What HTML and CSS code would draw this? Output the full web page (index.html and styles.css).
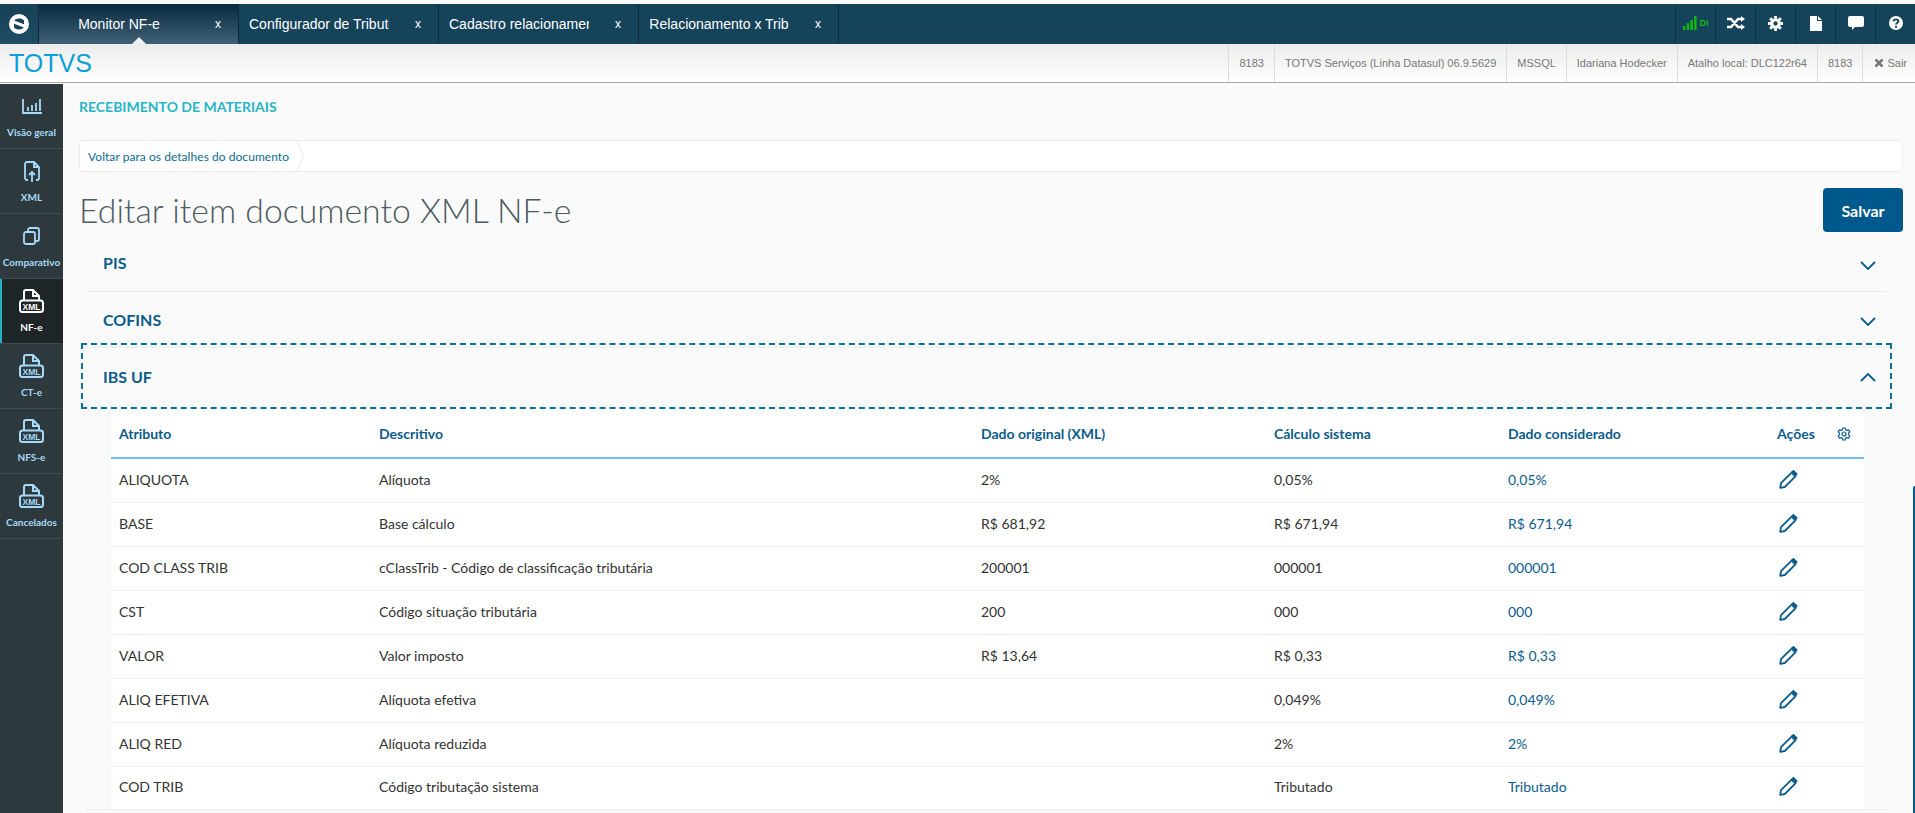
FILE: index.html
```html
<!DOCTYPE html>
<html lang="pt-BR">
<head>
<meta charset="utf-8">
<title>Editar item documento XML NF-e</title>
<link rel="stylesheet" href="styles.css">
</head>
<body>
<svg class="defs" width="0" height="0" aria-hidden="true">
  <symbol id="i-pencil" viewBox="0 0 19 19">
    <path d="M1.2 17.8l.8-4.6L12.6 2.6l3.8 3.8L5.800 17z" fill="none" stroke="currentColor" stroke-width="1.800" stroke-linejoin="round"/>
    <path d="M13.500 1.700l1-.7 3 3-.7 1.200z" fill="none" stroke="currentColor" stroke-width="1.800"/>
  </symbol>
  <symbol id="i-down" viewBox="0 0 16 9"><path d="M1 1l7 7 7-7" fill="none" stroke="currentColor" stroke-width="1.800"/></symbol>
  <symbol id="i-up" viewBox="0 0 16 9"><path d="M1 8l7-7 7 7" fill="none" stroke="currentColor" stroke-width="1.800"/></symbol>
</svg>

<header class="topbar">
  <div class="logo-cell">
    <svg class="logo" viewBox="0 0 20 20"><circle cx="10" cy="10" r="10" fill="#fff"/><path d="M5.200 6.400C7.500 4 12 3.700 15 6.500L15 10.200z" fill="#15435a"/><path d="M14.800 13.600C12.500 16 8 16.300 5 13.500L5 9.800z" fill="#15435a"/></svg>
  </div>
  <div class="tab tab-active"><span class="tab-label">Monitor NF-e</span><span class="tab-x">x</span></div>
  <div class="tab"><span class="tab-label">Configurador de Tributos</span><span class="tab-x">x</span></div>
  <div class="tab"><span class="tab-label">Cadastro relacionamento</span><span class="tab-x">x</span></div>
  <div class="tab"><span class="tab-label">Relacionamento x Trib</span><span class="tab-x">x</span></div>
  <div class="top-actions">
    <div class="action action-signal">
      <svg class="signal" viewBox="0 0 14 14"><path d="M0 10h2.500v4H0zM3.700 7h2.500v7H3.700zM7.400 4h2.500v10H7.400zM11.100 0h2.500v14h-2.500z" fill="#0fb80f"/></svg>
      <span class="signal-text">DI</span>
    </div>
    <div class="action"><svg class="ic-shuffle" viewBox="0 0 18 14"><path d="M0 3h4l7 8h3M0 11h4l7-8h3" fill="none" stroke="#fff" stroke-width="2.600"/><path d="M14 0l4 3-4 3zM14 8l4 3-4 3z" fill="#fff"/></svg></div>
    <div class="action"><svg class="ic-gear" viewBox="0 0 16 16"><circle cx="8" cy="8" r="4" fill="none" stroke="#fff" stroke-width="3.400"/><path d="M8 0v3M8 13v3M0 8h3M13 8h3M2.300 2.300l2.200 2.200M11.500 11.500l2.200 2.200M2.300 13.700l2.200-2.200M11.500 4.500l2.200-2.200" stroke="#fff" stroke-width="3"/></svg></div>
    <div class="action"><svg class="ic-file" viewBox="0 0 12 15"><path d="M0 0h7v5h5v10H0zM8 0l4 4H8z" fill="#fff"/></svg></div>
    <div class="action"><svg class="ic-comment" viewBox="0 0 16 14"><path d="M2 0h12a2 2 0 0 1 2 2v7a2 2 0 0 1-2 2H7l-3 3v-3H2a2 2 0 0 1-2-2V2a2 2 0 0 1 2-2z" fill="#fff"/></svg></div>
    <div class="action"><svg class="ic-help" viewBox="0 0 14 14"><circle cx="7" cy="7" r="7" fill="#fff"/><path d="M4.600 5.300C4.800 2.800 9.400 2.800 9.400 5.200 9.400 6.800 7 6.800 7 8.600" fill="none" stroke="#15435a" stroke-width="1.900"/><path d="M6 9.800h2v2H6z" fill="#15435a"/></svg></div>
  </div>
</header>

<div class="infobar">
  <div class="brand">TOTVS</div>
  <div class="infos">
    <div class="info">8183</div>
    <div class="info">TOTVS Serviços (Linha Datasul) 06.9.5629</div>
    <div class="info">MSSQL</div>
    <div class="info">Idariana Hodecker</div>
    <div class="info">Atalho local: DLC122r64</div>
    <div class="info">8183</div>
    <div class="info info-exit"><svg class="ic-x" viewBox="0 0 10 10"><path d="M1.500 1.500l7 7M8.500 1.500l-7 7" stroke="#777" stroke-width="2.600"/></svg>Sair</div>
  </div>
</div>

<div class="shell">
  <nav class="sidebar">
    <a class="nav-item">
      <span class="nav-icon"><svg class="ic-chart" viewBox="0 0 20 15"><path d="M1 0v14h19M6 12V8M10 12V6M14 12V4M18 12V0" fill="none" stroke="currentColor" stroke-width="1.800"/></svg></span>
      <span class="nav-label">Visão geral</span>
    </a>
    <a class="nav-item">
      <span class="nav-icon"><svg class="ic-upload" viewBox="0 0 16 21"><path d="M4 19H3a2 2 0 0 1-2-2V3a2 2 0 0 1 2-2h7l5 5v11a2 2 0 0 1-2 2h-1M10 1v5h5" fill="none" stroke="currentColor" stroke-width="1.800"/><path d="M8 21V11M5 14l3-3 3 3" fill="none" stroke="currentColor" stroke-width="1.800"/></svg></span>
      <span class="nav-label">XML</span>
    </a>
    <a class="nav-item">
      <span class="nav-icon"><svg class="ic-copy" viewBox="0 0 17 18"><rect x="1" y="5" width="11" height="12" rx="2" fill="none" stroke="currentColor" stroke-width="1.800"/><path d="M5 5V3a2 2 0 0 1 2-2h7a2 2 0 0 1 2 2v9a2 2 0 0 1-2 2h-2" fill="none" stroke="currentColor" stroke-width="1.800"/></svg></span>
      <span class="nav-label">Comparativo</span>
    </a>
    <a class="nav-item nav-active">
      <span class="nav-icon"><svg class="ic-xml" viewBox="0 0 25 24"><path d="M5 11V3a2 2 0 0 1 2-2h7l6 6v4M14 1v6h6" fill="none" stroke="currentColor" stroke-width="2"/><rect x="1" y="11.500" width="23" height="11.500" rx="2.500" fill="none" stroke="currentColor" stroke-width="2"/><text x="12.500" y="20.600" text-anchor="middle" class="xml-text">XML</text></svg></span>
      <span class="nav-label">NF-e</span>
    </a>
    <a class="nav-item">
      <span class="nav-icon"><svg class="ic-xml" viewBox="0 0 25 24"><path d="M5 11V3a2 2 0 0 1 2-2h7l6 6v4M14 1v6h6" fill="none" stroke="currentColor" stroke-width="2"/><rect x="1" y="11.500" width="23" height="11.500" rx="2.500" fill="none" stroke="currentColor" stroke-width="2"/><text x="12.500" y="20.600" text-anchor="middle" class="xml-text">XML</text></svg></span>
      <span class="nav-label">CT-e</span>
    </a>
    <a class="nav-item">
      <span class="nav-icon"><svg class="ic-xml" viewBox="0 0 25 24"><path d="M5 11V3a2 2 0 0 1 2-2h7l6 6v4M14 1v6h6" fill="none" stroke="currentColor" stroke-width="2"/><rect x="1" y="11.500" width="23" height="11.500" rx="2.500" fill="none" stroke="currentColor" stroke-width="2"/><text x="12.500" y="20.600" text-anchor="middle" class="xml-text">XML</text></svg></span>
      <span class="nav-label">NFS-e</span>
    </a>
    <a class="nav-item">
      <span class="nav-icon"><svg class="ic-xml" viewBox="0 0 25 24"><path d="M5 11V3a2 2 0 0 1 2-2h7l6 6v4M14 1v6h6" fill="none" stroke="currentColor" stroke-width="2"/><rect x="1" y="11.500" width="23" height="11.500" rx="2.500" fill="none" stroke="currentColor" stroke-width="2"/><text x="12.500" y="20.600" text-anchor="middle" class="xml-text">XML</text></svg></span>
      <span class="nav-label">Cancelados</span>
    </a>
  </nav>

  <main class="content">
    <div class="module">RECEBIMENTO DE MATERIAIS</div>
    <div class="breadcrumb">
      <span class="crumb">Voltar para os detalhes do documento</span>
      <svg class="crumb-sep" viewBox="0 0 8 32"><path d="M0 0l7 16-7 16" fill="none" stroke="#e8e8e8"/></svg>
    </div>
    <div class="page-head">
      <h1 class="title">Editar item documento XML NF-e</h1>
      <button class="save" type="button">Salvar</button>
    </div>

    <section class="acc acc-pis">
      <div class="acc-head"><span class="acc-title">PIS</span><svg class="chev"><use href="#i-down"/></svg></div>
    </section>
    <section class="acc">
      <div class="acc-head"><span class="acc-title">COFINS</span><svg class="chev"><use href="#i-down"/></svg></div>
    </section>
    <section class="acc acc-open">
      <div class="acc-head acc-focus"><span class="acc-title">IBS UF</span><svg class="chev"><use href="#i-up"/></svg></div>
      <table class="grid">
        <colgroup>
          <col class="c1"><col class="c2"><col class="c3"><col class="c4"><col class="c5"><col class="c6">
        </colgroup>
        <thead>
          <tr>
            <th>Atributo</th><th>Descritivo</th><th>Dado original (XML)</th><th>Cálculo sistema</th><th>Dado considerado</th>
            <th><span class="th-actions">Ações<svg class="ic-settings" viewBox="0 0 14 14"><path d="M5.800 1h2.400l.4 1.700 1.300.7 1.700-.5 1.200 2-1.300 1.300v1.600l1.300 1.300-1.200 2-1.700-.5-1.300.7L8.200 13H5.800l-.4-1.700-1.300-.7-1.700.5-1.200-2 1.300-1.300V6.200L1.200 4.900l1.200-2 1.700.5 1.300-.7z" fill="none" stroke="currentColor" stroke-width="1.200" stroke-linejoin="round"/><circle cx="7" cy="7" r="2" fill="none" stroke="currentColor" stroke-width="1.200"/></svg></span></th>
          </tr>
        </thead>
        <tbody>
          <tr><td>ALIQUOTA</td><td>Alíquota</td><td>2%</td><td>0,05%</td><td class="link">0,05%</td><td><svg class="ic-pencil"><use href="#i-pencil"/></svg></td></tr>
          <tr><td>BASE</td><td>Base cálculo</td><td>R$ 681,92</td><td>R$ 671,94</td><td class="link">R$ 671,94</td><td><svg class="ic-pencil"><use href="#i-pencil"/></svg></td></tr>
          <tr><td>COD CLASS TRIB</td><td>cClassTrib - Código de classificação tributária</td><td>200001</td><td>000001</td><td class="link">000001</td><td><svg class="ic-pencil"><use href="#i-pencil"/></svg></td></tr>
          <tr><td>CST</td><td>Código situação tributária</td><td>200</td><td>000</td><td class="link">000</td><td><svg class="ic-pencil"><use href="#i-pencil"/></svg></td></tr>
          <tr><td>VALOR</td><td>Valor imposto</td><td>R$ 13,64</td><td>R$ 0,33</td><td class="link">R$ 0,33</td><td><svg class="ic-pencil"><use href="#i-pencil"/></svg></td></tr>
          <tr><td>ALIQ EFETIVA</td><td>Alíquota efetiva</td><td></td><td>0,049%</td><td class="link">0,049%</td><td><svg class="ic-pencil"><use href="#i-pencil"/></svg></td></tr>
          <tr><td>ALIQ RED</td><td>Alíquota reduzida</td><td></td><td>2%</td><td class="link">2%</td><td><svg class="ic-pencil"><use href="#i-pencil"/></svg></td></tr>
          <tr><td>COD TRIB</td><td>Código tributação sistema</td><td></td><td>Tributado</td><td class="link">Tributado</td><td><svg class="ic-pencil"><use href="#i-pencil"/></svg></td></tr>
        </tbody>
      </table>
    </section>
  </main>
</div>
<div class="scroll-thumb"></div>
</body>
</html>
```

FILE: styles.css
```css
* { box-sizing: border-box; }
html, body { margin: 0; height: 813px; overflow: hidden; }
body {
  background: #fafafa;
  font-family: "Lato", "Noto Sans", sans-serif;
  color: #333;
  padding-top: 4px;
  display: flex;
  flex-direction: column;
  position: relative;
}
.defs { position: absolute; }
.xml-text { font: 700 8.500px "Liberation Sans", sans-serif; fill: currentColor; }

/* top bar */
.topbar {
  height: 40px;
  flex: none;
  background: #15435a;
  display: flex;
  font-family: "Liberation Sans", Arial, sans-serif;
  color: #fff;
}
.logo-cell {
  width: 39px;
  background: linear-gradient(#164158, #1f4d63);
  border-right: 1px solid #0b2a3d;
  display: flex;
  align-items: center;
  justify-content: center;
  padding: 0 0 1px;
}
.logo { width: 20px; height: 20px; }
.tab {
  width: 200px;
  flex: none;
  border-right: 1px solid #0b2a3d;
  display: flex;
  align-items: center;
  padding: 0 16px 0 10px;
  position: relative;
  font-size: 14px;
}
.tab-active { background: linear-gradient(#0a2a40, #3f6075); }
.tab-active::after {
  content: "";
  position: absolute;
  left: 93px;
  bottom: 0;
  border: 7px solid transparent;
  border-top: 0;
  border-bottom-color: #f1f1f1;
}
.tab-label {
  width: 140px;
  margin-right: 26px;
  white-space: nowrap;
  overflow: hidden;
  text-align: center;
}
.tab-x { font-size: 12px; }
.top-actions { margin-left: auto; display: flex; }
.action {
  width: 40px;
  border-left: 1px solid #0e3145;
  display: flex;
  align-items: center;
  justify-content: center;
  padding-bottom: 2px;
}
.action-signal { gap: 3px; }
.signal { width: 14px; height: 14px; }
.signal-text { color: #0fb80f; font-size: 9px; font-weight: 700; }
.ic-shuffle { width: 18px; height: 14px; }
.ic-gear { width: 15px; height: 15px; }
.ic-file { width: 12px; height: 15px; }
.ic-comment { width: 16px; height: 14px; }
.ic-help { width: 14px; height: 14px; }

/* info bar */
.infobar {
  height: 39px;
  flex: none;
  background: linear-gradient(#ececec, #fff);
  border-bottom: 1px solid #a8a8a8;
  display: flex;
  justify-content: space-between;
  font-family: "Liberation Sans", Arial, sans-serif;
}
.brand { font-size: 25px; color: #0a9fd6; padding: 5px 0 0 9px; line-height: 29px; }
.infos { display: flex; }
.info {
  border-left: 1px solid #dcdcdc;
  padding: 0 10px;
  font-size: 11px;
  color: #777;
  display: flex;
  align-items: center;
  white-space: nowrap;
}
.info-exit { padding: 0 8px 0 11px; gap: 3px; }
.ic-x { width: 10px; height: 10px; }

/* shell */
.shell { flex: 1; display: flex; min-height: 0; padding-top: 1px; }
.sidebar { width: 63px; flex: none; background: #2d393c; display: flex; flex-direction: column; }
.nav-item {
  height: 65px;
  flex: none;
  display: flex;
  flex-direction: column;
  align-items: center;
  color: #a6dafa;
  border-bottom: 1px solid #3f4b4e;
  padding-top: 2px;
}
.nav-active { background: #1e2527; color: #fff; box-shadow: inset 2px 0 0 #25b0c6; }
.nav-icon { height: 40px; display: flex; align-items: center; justify-content: center; }
.nav-label { font-size: 10px; line-height: 12px; font-weight: 700; white-space: nowrap; }
.ic-chart { width: 20px; height: 15px; }
.ic-upload { width: 16px; height: 21px; }
.ic-copy { width: 17px; height: 18px; }
.ic-xml { width: 25px; height: 24px; }

/* content */
.content { flex: 1; min-width: 0; padding: 0 12px 0 16px; }
.module {
  font-size: 14px;
  line-height: 18px;
  font-weight: 700;
  color: #29b5c6;
  margin-top: 14px;
}
.breadcrumb {
  height: 32px;
  margin-top: 24px;
  background: #fff;
  border: 1px solid #ececec;
  border-radius: 3px;
  display: flex;
  align-items: center;
  padding-left: 8px;
}
.crumb { font-size: 12px; letter-spacing: .05px; color: #0c6a92; }
.crumb-sep { width: 8px; height: 30px; margin-left: 8px; }
.page-head {
  display: flex;
  justify-content: space-between;
  align-items: center;
  height: 44px;
  margin-top: 16px;
}
.title { margin: 0; font-size: 33.800px; font-weight: 300; color: #4d5a60; line-height: 44px; }
.save {
  width: 80px;
  height: 44px;
  border: 0;
  border-radius: 4px;
  background: #00598c;
  color: #fff;
  font: 700 16px "Lato", sans-serif;
}

/* accordion */
.acc { margin: 0 16px 0 7px; border-bottom: 1px solid #ececec; }
.acc-pis { margin-top: 4px; }
.acc-head {
  height: 55px;
  display: flex;
  justify-content: space-between;
  align-items: center;
  padding: 0 11px 0 17px;
}
.acc-pis .acc-title { margin-bottom: 2px; }
.acc-title { font-size: 16px; font-weight: 700; color: #0b5c8c; }
.chev { width: 16px; height: 9px; color: #0b5c8c; margin-top: 3px; }
.acc-focus { height: 56px; outline: 2px dashed #0b6e99; outline-offset: 3px; position: relative; }
.grid {
  margin: 5px 0 0 25px;
  width: 1753px;
  table-layout: fixed;
  border-collapse: collapse;
  background: #fff;
  font-size: 14px;
}
.c1 { width: 260px; }
.c2 { width: 602px; }
.c3 { width: 293px; }
.c4 { width: 234px; }
.c5 { width: 269px; }
.grid th {
  height: 49px;
  text-align: left;
  padding: 1px 8px 0;
  color: #0b5c8c;
  font-weight: 700;
  border-bottom: 2px solid #6cc0f7;
}
.grid td {
  height: 44px;
  padding: 0 8px 2px;
  border-bottom: 1px solid #ececec;
  color: #333;
  white-space: nowrap;
}
.grid tbody tr:last-child td { height: 43px; border-bottom: 0; }
.grid td.link { color: #0b5c8c; }
.th-actions { display: flex; align-items: center; gap: 22px; }
.ic-settings { width: 14px; height: 14px; }
.ic-pencil { width: 19px; height: 19px; color: #0b5c8c; display: block; margin-left: 2px; }

.scroll-thumb {
  position: absolute;
  right: 0;
  top: 486px;
  bottom: 0;
  width: 2px;
  background: #005a8c;
  border-radius: 2px 0 0 0;
}
```
